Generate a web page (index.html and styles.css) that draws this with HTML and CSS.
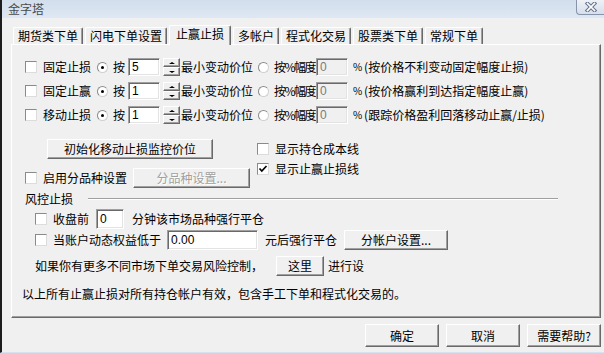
FILE: index.html
```html
<!DOCTYPE html>
<html lang="zh-CN">
<head>
<meta charset="utf-8">
<title>金字塔</title>
<link rel="stylesheet" href="styles.css">
</head>
<body>
<div class="window">
  <div class="titlebar">
    <span class="title">金字塔</span>
    <span class="close"><svg width="14" height="10" viewBox="0 0 14 10"><path d="M3.5 1.5 L10.5 8.5 M10.5 1.5 L3.5 8.5" stroke="#66748c" stroke-width="3.8" stroke-linecap="square" fill="none"/><path d="M3.5 1.5 L10.5 8.5 M10.5 1.5 L3.5 8.5" stroke="#fff" stroke-width="1.7" stroke-linecap="square" fill="none"/></svg></span>
  </div>

  <div class="tabs">
    <div class="tab">期货类下单</div>
    <div class="tab">闪电下单设置</div>
    <div class="tab active">止赢止损</div>
    <div class="tab">多帐户</div>
    <div class="tab">程式化交易</div>
    <div class="tab">股票类下单</div>
    <div class="tab">常规下单</div>
  </div>

  <div class="panel">
    <div class="row stop-row">
      <span class="cb"></span><span class="lbl">固定止损</span>
      <span class="radio on ml6"></span><span class="lbl ml5">按</span>
      <span class="field w32 ml3">5</span>
      <span class="spin"><span class="up"></span><span class="dn"></span></span>
      <span class="lbl ml1">最小变动价位</span>
      <span class="radio ml5"></span><span class="lbl pctlbl ml5">按%幅度</span>
      <span class="field w32 disabled ml1">0</span>
      <span class="pct">%</span>
      <span class="lbl ml4">(按价格不利变动固定幅度止损)</span>
    </div>
    <div class="row stop-row">
      <span class="cb"></span><span class="lbl">固定止赢</span>
      <span class="radio on ml6"></span><span class="lbl ml5">按</span>
      <span class="field w32 ml3">1</span>
      <span class="spin"><span class="up"></span><span class="dn"></span></span>
      <span class="lbl ml1">最小变动价位</span>
      <span class="radio ml5"></span><span class="lbl pctlbl ml5">按%幅度</span>
      <span class="field w32 disabled ml1">0</span>
      <span class="pct">%</span>
      <span class="lbl ml4">(按价格赢利到达指定幅度止赢)</span>
    </div>
    <div class="row stop-row">
      <span class="cb"></span><span class="lbl">移动止损</span>
      <span class="radio on ml6"></span><span class="lbl ml5">按</span>
      <span class="field w32 ml3">1</span>
      <span class="spin"><span class="up"></span><span class="dn"></span></span>
      <span class="lbl ml1">最小变动价位</span>
      <span class="radio ml5"></span><span class="lbl pctlbl ml5">按%幅度</span>
      <span class="field w32 disabled ml1">0</span>
      <span class="pct">%</span>
      <span class="lbl ml4">(跟踪价格盈利回落移动止赢/止损)</span>
    </div>

    <div class="mid">
      <div class="mid-left">
        <div class="btn init">初始化移动止损监控价位</div>
        <div class="row line20 mt9">
          <span class="cb"></span><span class="lbl">启用分品种设置</span>
          <span class="btn dis w117 ml6">分品种设置...</span>
        </div>
      </div>
      <div class="mid-right">
        <div class="row line20"><span class="cb"></span><span class="lbl">显示持仓成本线</span></div>
        <div class="row line20"><span class="cb checked"><svg width="10" height="10" viewBox="0 0 10 10"><path d="M1.5 4.5 L3.8 7 L8.5 2" stroke="#000" stroke-width="1.7" fill="none"/></svg></span><span class="lbl">显示止赢止损线</span></div>
      </div>
    </div>

    <div class="group-head">
      <span class="lbl">风控止损</span>
      <span class="rule"></span>
    </div>

    <div class="risk">
      <div class="row line20 mt3">
        <span class="cb"></span><span class="lbl">收盘前</span>
        <span class="field h20 w28 ml7">0</span>
        <span class="lbl ml8">分钟该市场品种强行平仓</span>
      </div>
      <div class="row line20 mt1">
        <span class="cb"></span><span class="lbl">当账户动态权益低于</span>
        <span class="field h20 w91 ml6">0.00</span>
        <span class="lbl ml7">元后强行平仓</span>
        <span class="btn w104 ml7">分帐户设置...</span>
      </div>
      <div class="row line20 mt6">
        <span class="lbl">如果你有更多不同市场下单交易风险控制，</span>
        <span class="btn w48 ml13">这里</span>
        <span class="lbl ml4">进行设</span>
      </div>
    </div>

    <div class="row line20 note">
      <span class="lbl">以上所有止赢止损对所有持仓帐户有效，包含手工下单和程式化交易的。</span>
    </div>
  </div>

  <div class="footer">
    <div class="btn big">确定</div>
    <div class="btn big">取消</div>
    <div class="btn big">需要帮助?</div>
  </div>
</div>
</body>
</html>
```

FILE: styles.css
```css
* { box-sizing: border-box; }
html, body { margin: 0; padding: 0; }
body {
  width: 604px;
  height: 353px;
  overflow: hidden;
  background: #f0f0f0;
  font-family: "Noto Sans CJK SC", "Noto Sans", sans-serif;
  font-size: 12px;
  line-height: 14px;
  color: #000;
}
.window {
  display: flex;
  flex-direction: column;
  height: 353px;
  border-left: 2px solid #1c1c1c;
  border-bottom: 1px solid #d6e2f0;
}
.titlebar {
  height: 18px;
  flex: none;
  display: flex;
  background: linear-gradient(#d2deec, #dee8f4);
}
.title {
  padding-left: 6px;
  line-height: 17px;
  color: #4a4a4a;
}
.close {
  margin-left: auto;
  width: 28px;
  height: 15px;
  border: 1px solid #8795ab;
  border-top: 0;
  border-right: 0;
  border-radius: 0 0 0 4px;
  background: linear-gradient(#eef2f7, #d6dfeb);
  display: flex;
  align-items: center;
  justify-content: center;
}

/* tabs */
.tabs {
  display: flex;
  align-items: flex-end;
  height: 19px;
  margin: 7px 0 0 11px;
  flex: none;
}
.tab {
  height: 17px;
  padding: 0 4px;
  margin-right: 2px;
  border-top: 1px solid #fff;
  border-left: 1px solid #fff;
  border-right: 1px solid #696969;
  border-radius: 2px 2px 0 0;
  box-shadow: inset -1px 0 0 #a0a0a0;
  line-height: 15px;
  white-space: nowrap;
}
.tab.active {
  height: 20px;
  padding: 0 6px;
  margin-bottom: -1px;
  position: relative;
  z-index: 1;
  background: #f0f0f0;
  line-height: 16px;
}

/* panel */
.panel {
  margin-left: 9px;
  width: 590px;
  height: 274px;
  flex: none;
  border: 1px solid;
  border-color: #fff #696969 #696969 #fff;
  box-shadow: inset -1px -1px 0 #a0a0a0;
  padding: 13px 0 0 13px;
}
.row {
  display: flex;
  align-items: center;
  white-space: nowrap;
}
.stop-row { height: 18px; margin-bottom: 6px; }
.line20 { height: 20px; }
.lbl { flex: none; }

.cb {
  width: 12px;
  height: 12px;
  flex: none;
  margin-right: 6px;
  background: #fff;
  border: 1px solid;
  border-color: #8a8a8a #dcdcdc #dcdcdc #8a8a8a;
  display: flex;
  align-items: center;
  justify-content: center;
}
.radio {
  width: 11px;
  height: 11px;
  flex: none;
  border-radius: 50%;
  background: #fff;
  border: 1px solid;
  border-color: #8a8a8a #d0d0d0 #d0d0d0 #8a8a8a;
  display: flex;
  align-items: center;
  justify-content: center;
}
.radio.on::after {
  content: "";
  width: 3px;
  height: 3px;
  border-radius: 50%;
  background: #000;
}
.field {
  height: 18px;
  flex: none;
  background: #fff;
  border: 1px solid;
  border-color: #a0a0a0 #fff #fff #a0a0a0;
  box-shadow: inset 1px 1px 0 #696969, inset -1px -1px 0 #e3e3e3;
  padding: 0 3px;
  line-height: 16px;
  font-family: "Liberation Sans", sans-serif;
}
.field.h20 { height: 20px; line-height: 18px; }
.field.disabled { background: #f0f0f0; color: #7a7a7a; }
.w28 { width: 28px; }
.w32 { width: 32px; }
.w48 { width: 48px; }
.w91 { width: 91px; }
.w104 { width: 104px; }
.w117 { width: 117px; }

.spin {
  width: 17px;
  height: 18px;
  flex: none;
  margin-left: 3px;
  display: flex;
  flex-direction: column;
}
.spin span {
  flex: 1;
  background: #f0f0f0;
  border: 1px solid;
  border-color: #fff #696969 #696969 #fff;
  box-shadow: inset -1px -1px 0 #a0a0a0;
  display: flex;
  align-items: center;
  justify-content: center;
}
.spin span::after {
  content: "";
  border-left: 3px solid transparent;
  border-right: 3px solid transparent;
}
.spin .up::after { border-bottom: 2px solid #000; }
.spin .dn::after { border-top: 2px solid #000; }

.pctlbl {
  letter-spacing: -1.5px;
}
.pct {
  width: 7px;
  margin-left: 5px;
  font-size: 10px;
  flex: none;
}

.btn {
  height: 20px;
  flex: none;
  display: flex;
  align-items: center;
  justify-content: center;
  background: #f0f0f0;
  border: 1px solid;
  border-color: #fff #696969 #696969 #fff;
  box-shadow: inset -1px -1px 0 #a0a0a0;
  white-space: nowrap;
}
.btn.dis { color: #a0a0a0; text-shadow: 1px 1px 0 #fff; }
.init { width: 166px; margin: 9px 0 0 22px; }

.mid { display: flex; }
.mid-left { width: 232px; flex: none; }
.mid-right { padding-top: 9px; }

.group-head {
  display: flex;
  align-items: center;
  height: 14px;
  margin-top: 4px;
}
.rule {
  width: 470px;
  height: 2px;
  margin-left: 15px;
  border-top: 1px solid #a0a0a0;
  border-bottom: 1px solid #fff;
}
.risk { padding-left: 10px; }
.note { margin: 8px 0 0 -3px; }

.footer {
  display: flex;
  justify-content: flex-end;
  gap: 7px;
  margin-top: 6px;
  padding-right: 3px;
}
.btn.big { width: 74px; height: 23px; }

.ml1 { margin-left: 1px; }
.ml2 { margin-left: 2px; }
.ml3 { margin-left: 3px; }
.ml4 { margin-left: 4px; }
.ml5 { margin-left: 5px; }
.ml6 { margin-left: 6px; }
.ml7 { margin-left: 7px; }
.ml8 { margin-left: 8px; }
.ml13 { margin-left: 13px; }
.mt1 { margin-top: 1px; }
.mt3 { margin-top: 3px; }
.mt6 { margin-top: 6px; }
.mt9 { margin-top: 9px; }
```
